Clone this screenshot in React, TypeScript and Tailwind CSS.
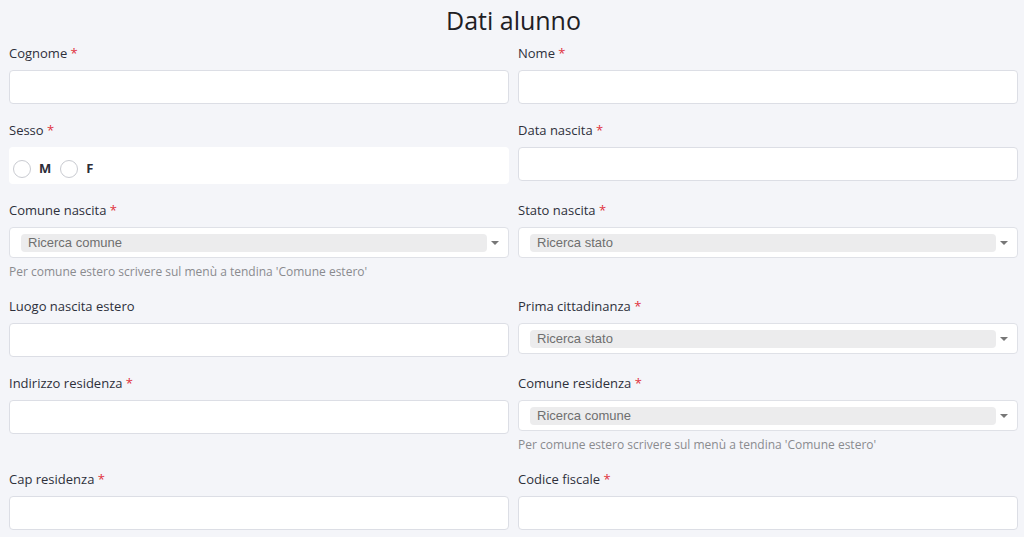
import React from 'react';

type Field = {
    label: string;
    required?: boolean;
    kind: 'input' | 'select' | 'sesso';
    placeholder?: string;
    help?: string;
};

const HELP = "Per comune estero scrivere sul menù a tendina 'Comune estero'";

const rows: [Field, Field][] = [
    [
        { label: 'Cognome', required: true, kind: 'input' },
        { label: 'Nome', required: true, kind: 'input' },
    ],
    [
        { label: 'Sesso', required: true, kind: 'sesso' },
        { label: 'Data nascita', required: true, kind: 'input' },
    ],
    [
        { label: 'Comune nascita', required: true, kind: 'select', placeholder: 'Ricerca comune', help: HELP },
        { label: 'Stato nascita', required: true, kind: 'select', placeholder: 'Ricerca stato' },
    ],
    [
        { label: 'Luogo nascita estero', kind: 'input' },
        { label: 'Prima cittadinanza', required: true, kind: 'select', placeholder: 'Ricerca stato' },
    ],
    [
        { label: 'Indirizzo residenza', required: true, kind: 'input' },
        { label: 'Comune residenza', required: true, kind: 'select', placeholder: 'Ricerca comune', help: HELP },
    ],
    [
        { label: 'Cap residenza', required: true, kind: 'input' },
        { label: 'Codice fiscale', required: true, kind: 'input' },
    ],
];

function Radio({ label }: { label: string }) {
    return (
        <label className="flex items-center gap-[8px]">
            <span className="w-[18px] h-[18px] rounded-full border border-[#c9cbd1] bg-white" />
            <span className="text-[13px] font-bold text-[#2b2d38]">{label}</span>
        </label>
    );
}

function Control({ field }: { field: Field }) {
    if (field.kind === 'sesso') {
        return (
            <div className="h-[37px] bg-white rounded-[4px] flex items-center gap-[9px] pl-[4px] pt-[6px]">
                <Radio label="M" />
                <Radio label="F" />
            </div>
        );
    }
    if (field.kind === 'select') {
        return (
            <div>
                <div className="h-[31px] bg-white border border-[#dfe1e7] rounded-[4px] flex items-center pl-[11px] pr-[9px]">
                    <div className="flex-1 h-[18px] bg-[#ececed] rounded-[4px] flex items-center pl-[7px]">
                        <span className="text-[13px] text-[#6f6f6f]" style={{ fontFamily: '"Liberation Sans", Arial, sans-serif' }}>
                            {field.placeholder}
                        </span>
                    </div>
                    <span className="ml-[4px] w-0 h-0 border-l-[4px] border-r-[4px] border-t-[4px] border-l-transparent border-r-transparent border-t-[#777]" />
                </div>
                {field.help && (
                    <p className="mt-[5px] text-[12px] leading-[17px] text-[#8a8b8f]">{field.help}</p>
                )}
            </div>
        );
    }
    return (
        <input
            type="text"
            className="block w-full h-[34px] bg-white border border-[#dcdee5] rounded-[4px] px-3 text-[13px] focus:outline-none"
        />
    );
}

function FieldBlock({ field }: { field: Field }) {
    return (
        <div className="mb-[17px]">
            <label className="block text-[13px] leading-[18px] text-[#2e303b] mb-[8px]">
                {field.label}
                {field.required && <span className="text-[#e0313c]"> *</span>}
            </label>
            <Control field={field} />
        </div>
    );
}

export default function App() {
    return (
        <div
            className="min-h-screen bg-[#f4f5f9] pl-[9px] pr-[6px] pt-[3px]"
            style={{ fontFamily: '"Open Sans", "Noto Sans", sans-serif' }}
        >
            <h1 className="text-center text-[25px] leading-[34px] text-[#1f2024] mb-[7px]">Dati alunno</h1>

            <div className="grid grid-cols-2 gap-x-[9px] items-start">
                {rows.map(([left, right]) => (
                    <React.Fragment key={left.label}>
                        <FieldBlock field={left} />
                        <FieldBlock field={right} />
                    </React.Fragment>
                ))}
            </div>
        </div>
    );
}
